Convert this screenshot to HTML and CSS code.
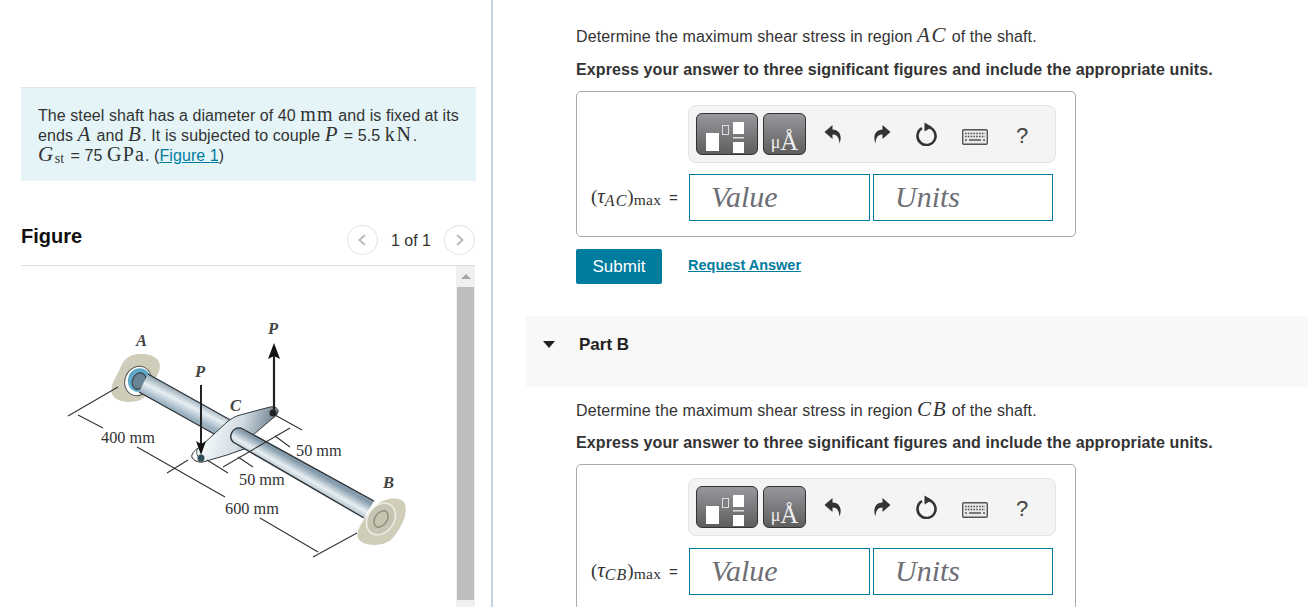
FILE: index.html
```html
<!DOCTYPE html>
<html lang="en">
<head>
<meta charset="utf-8">
<title>Shaft problem</title>
<link rel="stylesheet" href="styles.css">
</head>
<body>
<svg class="defs" width="0" height="0" aria-hidden="true">
  <defs>
    <symbol id="i-undo" viewBox="0 0 18 20"><path d="M8.5 1 L0.5 8 L8.5 15 V10.5 C12.5 10.5 15 12.5 15.5 19.5 C18.5 12 15.5 5.5 8.5 5.5 Z"/></symbol>
    <symbol id="i-redo" viewBox="0 0 18 20"><path d="M9.5 1 L17.5 8 L9.5 15 V10.5 C5.5 10.5 3 12.5 2.5 19.5 C-0.5 12 2.5 5.5 9.5 5.5 Z"/></symbol>
    <symbol id="i-reset" viewBox="0 0 22 24"><path d="M7 6.2 A9 9 0 1 0 12 5" fill="none" stroke="#333" stroke-width="2.6"/><path d="M9.5 0.5 L17 5 L9.5 9.5 Z" fill="#333"/></symbol>
    <symbol id="i-keys" viewBox="0 0 26 16">
      <rect x="0.7" y="0.7" width="24.6" height="14.6" rx="1.2" fill="#e9e9e9" stroke="#555" stroke-width="1.4"/>
      <path d="M3 4.5h20M3 7.5h20" stroke="#555" stroke-width="1.6" stroke-dasharray="1.6 1.2"/>
      <path d="M3 11h2M7 11h12M21 11h2" stroke="#555" stroke-width="1.6"/>
    </symbol>
  </defs>
</svg>

<aside class="left">
  <div class="note">
    The steel shaft has a diameter of 40 <span class="m">mm</span> and is fixed at its
    ends <i class="m mi">A</i> and <i class="m mi">B</i>. It is subjected to couple <i class="m mi">P</i> = 5.5 <span class="m ku">kN</span>.<br>
    <i class="m mi">G</i><span class="m sub-st">st</span> = 75 <span class="m">GPa</span>. (<a href="#" class="link">Figure 1</a>)
  </div>

  <div class="fig-head">
    <h2 class="fig-title">Figure</h2>
    <div class="pager">
      <span class="round"><svg width="10" height="14" viewBox="0 0 10 14"><path d="M8 2 L2.5 7 L8 12" fill="none" stroke="#bbb" stroke-width="2"/></svg></span>
      <span class="count">1 of 1</span>
      <span class="round"><svg width="10" height="14" viewBox="0 0 10 14"><path d="M2 2 L7.5 7 L2 12" fill="none" stroke="#bbb" stroke-width="2"/></svg></span>
    </div>
  </div>

  <div class="fig-body">
    <svg class="diagram" width="435" height="341" viewBox="21 266 435 341">
      <defs>
        <linearGradient id="shaftA" gradientUnits="userSpaceOnUse" x1="148" y1="374" x2="139" y2="392">
          <stop offset="0" stop-color="#8ba0af"/><stop offset="0.5" stop-color="#e8eff3"/><stop offset="1" stop-color="#9ab0bf"/>
        </linearGradient>
        <linearGradient id="shaftB" gradientUnits="userSpaceOnUse" x1="300" y1="464" x2="291" y2="480">
          <stop offset="0" stop-color="#869cac"/><stop offset="0.5" stop-color="#e8eff3"/><stop offset="1" stop-color="#9ab0bf"/>
        </linearGradient>
        <linearGradient id="lever" gradientUnits="userSpaceOnUse" x1="205" y1="435" x2="262" y2="450">
          <stop offset="0" stop-color="#f4f8fa"/><stop offset="0.55" stop-color="#d2dde4"/><stop offset="1" stop-color="#7f909c"/>
        </linearGradient>
      </defs>
      <!-- walls -->
      <path d="M127 358 C136 351 155 353 159 362 C163 372 153 379 149 391 C145 403 125 405 115 398 C108 392 113 381 118 373 C121 367 122 362 127 358 Z" fill="#cfccb9"/>
      <path d="M377 505 C385 497 402 496 405 504 C408 513 402 528 392 539 C384 547 362 547 358 538 C355 531 365 515 377 505 Z" fill="#d0cdb9"/>
      <!-- wall A ring -->
      <ellipse cx="138" cy="381" rx="13" ry="15" transform="rotate(25 138 381)" fill="#fff" stroke="#555" stroke-width="1"/>
      <ellipse cx="139" cy="380" rx="11" ry="12" transform="rotate(25 139 380)" fill="#5ea9c7"/>
      <ellipse cx="139" cy="381" rx="6.5" ry="8.5" transform="rotate(25 139 381)" fill="#6a8494" stroke="#333" stroke-width="1"/>
      <!-- shaft behind the lever -->
      <path d="M148 374 L250 431 L241 449 L139 392 Z" fill="url(#shaftA)"/>
      <path d="M148 374 L250 431 M139 392 L241 449" stroke="#2e3336" stroke-width="1.3" fill="none"/>
      <!-- wall B ring -->
      <ellipse cx="381" cy="519" rx="13" ry="17" transform="rotate(35 381 519)" fill="#c7c5b2" stroke="#efeee5" stroke-width="1.5"/>
      <ellipse cx="381" cy="519" rx="6" ry="9" transform="rotate(35 381 519)" fill="none" stroke="#8f8e7e" stroke-width="1.5"/>
      <!-- lever -->
      <path d="M192 455 C194 451 197 449 200 447 L227 422 C232 418 236 416 240 415 L270 407 C275 406 279 409 278 412 C277 415 275 417 273 418 L253 435 L247 448 L227 455 L203 462 C197 463 191 459 192 455 Z" fill="url(#lever)" stroke="#33393d" stroke-width="1"/>
      <path d="M198 448 C195 451 197 458 203 461 C197 463 191 459 192 455 C193 452 195 450 198 448 Z" fill="#fff" stroke="#333" stroke-width="0.8"/>
      <!-- shaft in front -->
      <path d="M241 428 L374 501 L364 518 L233 442 C229 436 234 427 241 428 Z" fill="url(#shaftB)"/>
      <path d="M241 428 L374 501 M233 442 L364 518 M241 428 C232 427 228 437 233 442" stroke="#2e3336" stroke-width="1.4" fill="none"/>
      <circle cx="273" cy="413" r="3.5" fill="#222"/>
      <circle cx="201" cy="458" r="3.5" fill="#33505f"/>
      <!-- force arrows -->
      <path d="M201 385 V450" stroke="#222" stroke-width="2"/>
      <path d="M196 441 L201 455 L206 441 L201 444 Z" fill="#111"/>
      <path d="M274 412 V352" stroke="#222" stroke-width="2.2"/>
      <path d="M268 359 L274 343 L280 359 L274 356 Z" fill="#111"/>
      <!-- dimensions -->
      <g stroke="#333" stroke-width="1.1" fill="none">
        <path d="M68 416 L118 387 M78 415 L103 428"/>
        <path d="M137 447 L225 497 M167 473 L188 460"/>
        <path d="M260 518 L318 552 M313 557 L357 533"/>
        <path d="M207 460 L228 473 M223 467 L290 428 M238 457 L253 467"/>
        <path d="M275 415 L302 430 M275 436 L290 447"/>
      </g>
      <!-- labels -->
      <g class="dim">
        <text x="101" y="443">400 mm</text>
        <text x="296" y="456">50 mm</text>
        <text x="239" y="485">50 mm</text>
        <text x="225" y="514">600 mm</text>
      </g>
      <g class="pt">
        <text x="136" y="346">A</text>
        <text x="195" y="377">P</text>
        <text x="268" y="334">P</text>
        <text x="230" y="411">C</text>
        <text x="383" y="488">B</text>
      </g>
    </svg>
    <div class="scroll">
      <div class="scroll-up"><span class="tri"></span></div>
      <div class="scroll-thumb"></div>
    </div>
  </div>
</aside>

<main class="right">
  <section class="part top">
    <p class="q">Determine the maximum shear stress in region <i class="m mi">AC</i> of the shaft.</p>
    <p class="ex">Express your answer to three significant figures and include the appropriate units.</p>
    <div class="answer">
      <div class="toolbar">
        <button class="tb-btn wide" type="button" aria-label="templates">
          <svg width="60" height="40" viewBox="0 0 60 40">
            <rect x="9" y="19" width="13" height="18" fill="#fff"/>
            <rect x="25.5" y="11.5" width="6" height="9" fill="none" stroke="#ddd" stroke-width="1"/>
            <rect x="36" y="8" width="11" height="12" fill="#fff"/>
            <rect x="36" y="23" width="11" height="1.5" fill="#ddd"/>
            <rect x="36" y="28" width="11" height="11" fill="#fff"/>
          </svg>
        </button>
        <button class="tb-btn units" type="button"><span class="mu">μ</span><span class="ang">Å</span></button>
        <svg class="ic undo" width="18" height="20"><use href="#i-undo"/></svg>
        <svg class="ic redo" width="18" height="20"><use href="#i-redo"/></svg>
        <svg class="ic reset" width="22" height="24"><use href="#i-reset"/></svg>
        <svg class="ic keys" width="26" height="16"><use href="#i-keys"/></svg>
        <span class="help">?</span>
      </div>
      <div class="row">
        <span class="lab">(<i class="tau">τ</i><i class="lab-sub">AC</i>)<span class="lab-max">max</span> <span class="eq">=</span></span>
        <div class="field">Value</div>
        <div class="field">Units</div>
      </div>
    </div>
    <div class="actions">
      <button class="submit" type="button">Submit</button>
      <a href="#" class="req">Request Answer</a>
    </div>
  </section>

  <div class="part-head"><span class="caret"></span><h3>Part B</h3></div>

  <section class="part second">
    <p class="q">Determine the maximum shear stress in region <i class="m mi">CB</i> of the shaft.</p>
    <p class="ex">Express your answer to three significant figures and include the appropriate units.</p>
    <div class="answer">
      <div class="toolbar">
        <button class="tb-btn wide" type="button" aria-label="templates">
          <svg width="60" height="40" viewBox="0 0 60 40">
            <rect x="9" y="19" width="13" height="18" fill="#fff"/>
            <rect x="25.5" y="11.5" width="6" height="9" fill="none" stroke="#ddd" stroke-width="1"/>
            <rect x="36" y="8" width="11" height="12" fill="#fff"/>
            <rect x="36" y="23" width="11" height="1.5" fill="#ddd"/>
            <rect x="36" y="28" width="11" height="11" fill="#fff"/>
          </svg>
        </button>
        <button class="tb-btn units" type="button"><span class="mu">μ</span><span class="ang">Å</span></button>
        <svg class="ic undo" width="18" height="20"><use href="#i-undo"/></svg>
        <svg class="ic redo" width="18" height="20"><use href="#i-redo"/></svg>
        <svg class="ic reset" width="22" height="24"><use href="#i-reset"/></svg>
        <svg class="ic keys" width="26" height="16"><use href="#i-keys"/></svg>
        <span class="help">?</span>
      </div>
      <div class="row">
        <span class="lab">(<i class="tau">τ</i><i class="lab-sub">CB</i>)<span class="lab-max">max</span> <span class="eq">=</span></span>
        <div class="field">Value</div>
        <div class="field">Units</div>
      </div>
    </div>
  </section>
</main>
</body>
</html>
```
FILE: styles.css
```css
* { box-sizing: border-box; }
html, body { margin: 0; height: 607px; overflow: hidden; }
body {
  display: flex;
  background: #fff;
  color: #333;
  font-family: "Liberation Sans", Arial, sans-serif;
  font-size: 16px;
  line-height: 20px;
  letter-spacing: 0.11px;
}
.defs { position: absolute; }
.m { font-family: "Liberation Serif", serif; font-size: 20px; line-height: 0; letter-spacing: 1.2px; }
.mi { font-size: 21px; letter-spacing: 1.6px; }
.ku { letter-spacing: 1.8px; }
.sub-st { font-size: 14px; position: relative; top: 2px; letter-spacing: 0; margin-right: 2px; }
.link { color: #007c9e; }

.left {
  width: 493px;
  flex: none;
  padding: 87px 17px 0 21px;
  border-right: 2px solid #c3d3e2;
  height: 607px;
}
.note {
  width: 455px;
  height: 94px;
  padding: 18px 10px 0 17px;
  background: #e5f5f7;
  border-top: 1px solid #dde5e6;
  letter-spacing: 0.07px;
}
.fig-head {
  width: 454px;
  height: 85px;
  padding: 43px 0 0 0;
  display: flex;
  justify-content: space-between;
  border-bottom: 1px solid #ddd;
}
.fig-title { margin: 0; font-size: 20px; line-height: 24px; font-weight: bold; color: #111; letter-spacing: 0; }
.pager { display: flex; align-items: flex-start; }
.round {
  width: 31px; height: 30px;
  margin-top: 1px;
  border: 1px solid #e2e2e2;
  border-radius: 50%;
  display: flex; align-items: center; justify-content: center;
}
.count { margin: 7px 13px 0 13px; letter-spacing: 0; }
.fig-body { display: flex; width: 454px; height: 341px; }
.diagram { flex: none; display: block; }
.dim text { font-family: "Liberation Serif", serif; font-size: 16.3px; fill: #333; letter-spacing: 0; }
.pt text { font-family: "Liberation Serif", serif; font-size: 16.5px; font-style: italic; font-weight: bold; fill: #444; letter-spacing: 0; }
.scroll { width: 19px; background: #f0f0f0; }
.scroll-up { height: 21px; display: flex; justify-content: center; align-items: center; }
.tri { border: 5px solid transparent; border-top: 0; border-bottom: 5px solid #a6a6a6; }
.scroll-thumb { width: 17px; margin-left: 1px; height: 313px; background: #bdbdbd; }

.right { flex: 1; min-width: 0; }
.part { padding-left: 83px; }
.part.top { padding-top: 27px; height: 316px; }
.part.second { padding-top: 14px; }
.q { margin: 0 0 13px; }
.second .q { margin-bottom: 12px; }
.ex { margin: 0 0 11px; font-weight: bold; color: #333; }
.answer {
  width: 500px;
  height: 146px;
  border: 1px solid #aaa;
  border-radius: 5px;
  padding: 13px 19px 0 112px;
}
.toolbar {
  width: 368px;
  height: 58px;
  margin-left: -1px;
  background: #f4f4f4;
  border: 1px solid #e4e4e4;
  border-radius: 8px;
  display: flex;
  align-items: center;
  padding-left: 7px;
}
.tb-btn {
  height: 42px;
  padding: 0;
  border: 1px solid #333;
  border-radius: 6px;
  background: linear-gradient(#98979d, #5e5e5e);
  color: #eee;
  font-family: "Liberation Serif", serif;
}
.tb-btn svg { display: block; }
.wide { width: 62px; }
.units { width: 43px; margin-left: 5px; display: flex; justify-content: center; align-items: flex-end; line-height: 24px; }
.mu { font-size: 18px; }
.ang { font-size: 25px; }
.ic { fill: #333; flex: none; }
.undo { margin-left: 18px; }
.redo { margin-left: 31px; }
.reset { margin-left: 24px; }
.keys { margin-left: 25px; position: relative; top: 3px; }
.help { margin: 3px 0 0 28px; font-size: 22px; color: #444; letter-spacing: 0; }
.row { display: flex; align-items: stretch; margin: 11px 0 0 -98px; }
.second .row { margin-top: 12px; }
.lab {
  width: 98px;
  font-family: "Liberation Serif", serif;
  font-size: 19px;
  white-space: nowrap;
  padding-top: 12px;
  letter-spacing: 0;
}
.tau { font-size: 21px; }
.lab-sub { font-size: 16px; position: relative; top: 3px; letter-spacing: 1px; }
.lab-max { font-size: 15.5px; position: relative; top: 2px; letter-spacing: 0.3px; }
.eq { font-family: "Liberation Sans", sans-serif; font-size: 15px; margin-left: 3px; }
.field {
  width: 181px;
  height: 47px;
  border: 1px solid #007c9e;
  font-family: "Liberation Serif", serif;
  font-style: italic;
  font-size: 30px;
  line-height: 44px;
  color: #6d6f75;
  padding-left: 21px;
  background: #fff;
  letter-spacing: 0;
}
.field + .field { margin-left: 3px; width: 180px; }
.actions { display: flex; align-items: center; margin-top: 12px; }
.submit {
  width: 86px; height: 35px;
  border: 0; border-radius: 2px;
  background: #007c9e;
  color: #fff;
  font: 17px "Liberation Sans", sans-serif;
}
.req {
  margin: -4px 0 0 26px;
  color: #007c9e;
  font-weight: bold;
  font-size: 14.5px;
  letter-spacing: 0;
}
.part-head {
  margin-left: 33px;
  height: 71px;
  background: #f8f8f8;
  display: flex;
  align-items: flex-start;
  padding: 19px 0 0 17px;
}
.caret {
  margin-top: 6px;
  border: 6.5px solid transparent;
  border-bottom: 0;
  border-top: 7px solid #222;
}
.part-head h3 { margin: 0 0 0 24px; font-size: 17px; line-height: 20px; font-weight: bold; color: #222; letter-spacing: 0; }
```
